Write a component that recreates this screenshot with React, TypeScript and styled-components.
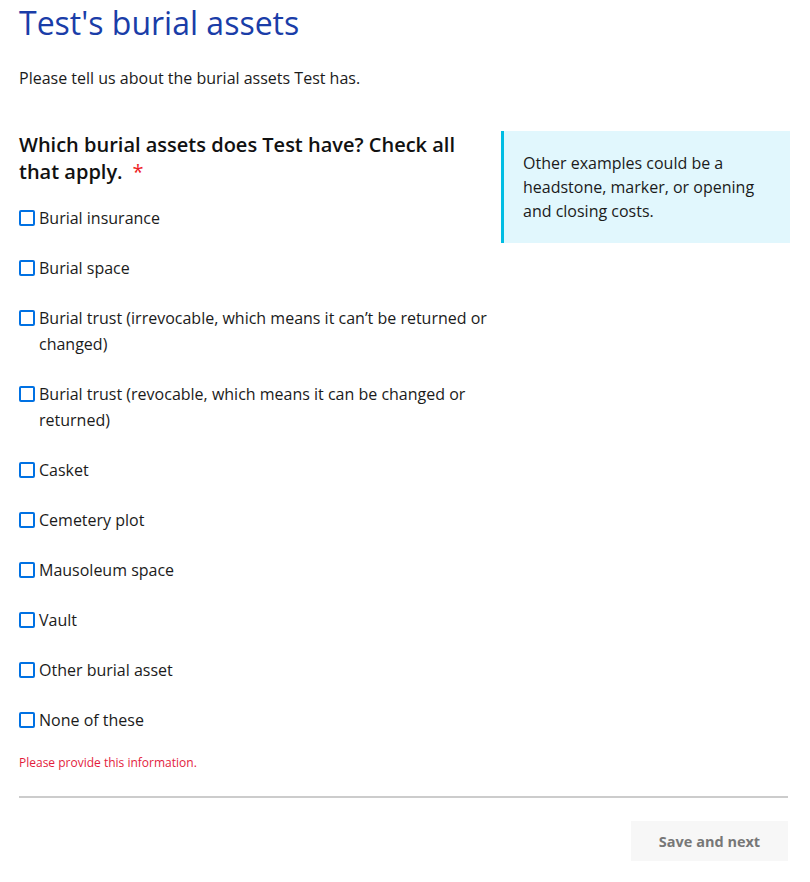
import styled, { createGlobalStyle } from 'styled-components';

const GlobalStyle = createGlobalStyle`
  body {
    margin: 0;
    background: #ffffff;
    font-family: "Open Sans", "Noto Sans", sans-serif;
    color: #1b1b1b;
  }
`;

const options = [
  'Burial insurance',
  'Burial space',
  'Burial trust (irrevocable, which means it can\u2019t be returned or changed)',
  'Burial trust (revocable, which means it can be changed or returned)',
  'Casket',
  'Cemetery plot',
  'Mausoleum space',
  'Vault',
  'Other burial asset',
  'None of these',
];

const App = () => {
  return (
    <>
      <GlobalStyle />
      <Page>
        <Title>Test's burial assets</Title>
        <Intro>Please tell us about the burial assets Test has.</Intro>
        <Columns>
          <Fieldset>
            <Question>
              Which burial assets does Test have? Check all that apply.
              <Required>*</Required>
            </Question>
            <OptionList>
              {options.map((label) => (
                <Option key={label}>
                  <Box type="checkbox" />
                  <span>{label}</span>
                </Option>
              ))}
            </OptionList>
            <ErrorText>Please provide this information.</ErrorText>
          </Fieldset>
          <Callout>Other examples could be a headstone, marker, or opening and closing costs.</Callout>
        </Columns>
        <Divider />
        <Footer>
          <SaveButton type="button">Save and next</SaveButton>
        </Footer>
      </Page>
    </>
  );
};

export default App;

const Page = styled.div`
  padding: 0 20px 20px 19px;
`;

const Title = styled.h1`
  margin: 0;
  padding-top: 3px;
  font-size: 32px;
  font-weight: 400;
  line-height: 40px;
  color: #1a3da8;
`;

const Intro = styled.p`
  margin: 23px 0 0;
  font-size: 16px;
  line-height: 24px;
`;

const Columns = styled.div`
  display: grid;
  grid-template-columns: 1fr 289px;
  column-gap: 11px;
  align-items: start;
  margin-top: 41px;
`;

const Fieldset = styled.div`
  display: flex;
  flex-direction: column;
`;

const Question = styled.h2`
  margin: 0;
  font-size: 20px;
  font-weight: 600;
  line-height: 27px;
  color: #111111;
`;

const Required = styled.span`
  display: inline-block;
  margin-left: 10px;
  line-height: 20px;
  color: #ee1c25;
  font-weight: 400;
`;

const OptionList = styled.div`
  display: flex;
  flex-direction: column;
  gap: 24px;
  margin-top: 20px;
`;

const Option = styled.label`
  display: flex;
  align-items: flex-start;
  gap: 4px;
  font-size: 16px;
  line-height: 26px;
  color: #1b1b1b;
`;

const Box = styled.input`
  appearance: none;
  flex: none;
  width: 16px;
  height: 16px;
  margin: 5px 0 0;
  border: 2px solid #0071e3;
  border-radius: 2px;
  background: #ffffff;
  box-sizing: border-box;
`;

const ErrorText = styled.div`
  margin-top: 22px;
  font-size: 12px;
  line-height: 16px;
  color: #e31c3d;
`;

const Callout = styled.div`
  padding: 20px 20px 20px 19px;
  border-left: 3px solid #00bde3;
  background: #e1f7fd;
  font-size: 16px;
  line-height: 24px;
  color: #1b1b1b;
`;

const Divider = styled.hr`
  margin: 25px 2px 0 0;
  border: none;
  border-top: 2px solid #cccccc;
`;

const Footer = styled.div`
  display: flex;
  justify-content: flex-end;
  margin-top: 23px;
  padding-right: 2px;
`;

const SaveButton = styled.button`
  width: 157px;
  height: 40px;
  border: none;
  background: #f7f7f7;
  font-family: "Open Sans", "Noto Sans", sans-serif;
  font-size: 14.5px;
  font-weight: 700;
  color: #777777;
`;
